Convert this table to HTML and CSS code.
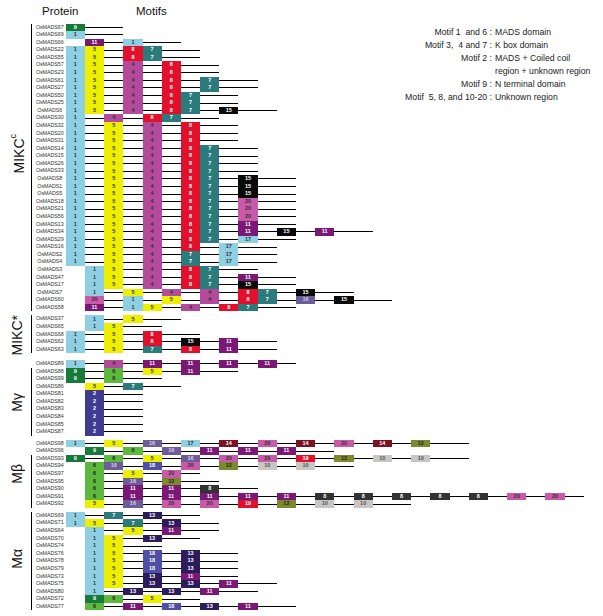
FILE: index.html
```html
<!DOCTYPE html>
<html lang="en">
<head>
<meta charset="utf-8">
<title>MADS-box motifs</title>
<link rel="stylesheet" href="styles.css">
</head>
<body>
<div class="page">
  <header class="head">
    <span class="h-protein">Protein</span>
    <span class="h-motifs">Motifs</span>
  </header>
  <div class="legend">
    <span class="lk">Motif 1  and 6 :</span><span class="lv">MADS domain</span>
    <span class="lk">Motif 3,  4 and 7 :</span><span class="lv">K box domain</span>
    <span class="lk">Motif 2 :</span><span class="lv">MADS + Coiled coil
region + unknown region</span>
    <span class="lk">Motif 9 :</span><span class="lv">N terminal domain</span>
    <span class="lk">Motif  5, 8, and 10-20 :</span><span class="lv">Unknown region</span>
  </div>
  <div id="groups" class="groups"></div>
</div>
<script src="script.js"></script>
</body>
</html>
```
FILE: styles.css
```css
* { box-sizing: border-box; }
html, body { margin: 0; padding: 0; background: #fff; }
body { font-family: "Liberation Sans", Arial, sans-serif; color: #111; }
.page { position: relative; width: 603px; height: 616px; overflow: hidden; }

.head { display: flex; height: 23.5px; padding-left: 42px; }
.head span { font-size: 11.5px; line-height: 11.5px; margin-top: 6px; }
.h-protein { width: 94px; }

.legend {
  position: absolute; left: 381px; top: 25.5px;
  display: grid; grid-template-columns: 111px auto; column-gap: 3px;
  font-size: 8.7px; line-height: 13px; color: #222; white-space: pre;
}
.lk { text-align: right; }

.group { display: flex; }
.group + .group { margin-top: 4px; }
.glabel { width: 41px; display: flex; align-items: center; justify-content: center; padding-left: 3px; }
.glabel span { writing-mode: vertical-rl; transform: rotate(180deg); font-size: 14px; line-height: 1; color: #111; }
.glabel sup { font-size: 9px; }
.g-mc .glabel { padding-bottom: 28px; }
.g-mg .glabel { padding-top: 10px; }
.g-ma .glabel { padding-bottom: 4px; }

.seg { border-left: 1px solid transparent; }
.seg.br { border-left-color: #000; }

.row { display: flex; height: 7.58px; }
.name {
  width: 34px; padding-left: 2px; font-size: 5.4px; line-height: 7.58px;
  text-align: center; color: #333; white-space: nowrap; letter-spacing: -0.1px;
}
.track { display: grid; grid-template-columns: repeat(28, 19.2px); grid-template-rows: 7.58px; }
.track > * { grid-row: 1; }
.ln { align-self: center; height: 1px; background: #000; }
.mb {
  display: flex; align-items: center; justify-content: center;
  font-size: 5.5px; font-weight: bold; font-style: normal; color: #fff; line-height: 1;
}
.m1, .m17 { background: #8ecfe3; color: #333; }
.m2 { background: #3d3c92; }
.m4 { background: #b34a9c; color: #333; }
.m5 { background: #eeee00; color: #333; }
.m6 { background: #5db83e; color: #222; }
.m7 { background: #2b7b7c; }
.m8, .m19 { background: #e3102b; }
.m8d { background: #333; }
.m9 { background: #17793a; }
.m10 { background: #c8c6c4; color: #555; }
.m11 { background: #7b1875; }
.m12 { background: #7b8a2c; color: #222; }
.m13 { background: #2d1c5c; }
.m14 { background: #7c1222; }
.m15 { background: #0a0a0a; }
.m16 { background: #6c5c98; color: #d6d2e6; }
.m18 { background: #4f4fa6; }
.m20 { background: #c95aa9; color: #333; }
```
FILE: script.js
```js
const K = '0:1,2:5,4:4,6:8,7:7';
const data = [
  { label: 'MIKC<sup>c</sup>', cls: 'g-mc', segs: [[true, [
    'OsMADS67|3|0:9', 'OsMADS69|3|0:1', 'OsMADS66|6|1:11,3:1',
    'OsMADS22|7|0:1,1:5,3:8,4:7', 'OsMADS55|7|0:1,1:5,3:8,4:7',
    'OsMADS57|8|0:1,1:5,3:4,5:8', 'OsMADS23|8|0:1,1:5,3:4,5:8',
    'OsMADS61|10|0:1,1:5,3:4,5:8,7:7', 'OsMADS27|10|0:1,1:5,3:4,5:8,7:7',
    'OsMADS50|9|0:1,1:5,3:4,5:8,6:7', 'OsMADS25|9|0:1,1:5,3:4,5:8,6:7',
    'OsMADS6|11|0:1,1:5,3:4,5:8,6:7,8:15',
    'OsMADS30|8|0:1,2:4,4:8,5:7',
    'OsMADS32|9|0:1,2:5,4:4,6:8', 'OsMADS20|9|0:1,2:5,4:4,6:8', 'OsMADS31|9|0:1,2:5,4:4,6:8',
    'OsMADS14|10|' + K, 'OsMADS15|10|' + K, 'OsMADS26|10|' + K, 'OsMADS33|10|' + K,
    'OsMADS8|12|' + K + ',9:15', 'OsMADS1|12|' + K + ',9:15', 'OsMADS5|12|' + K + ',9:15',
    'OsMADS18|12|' + K + ',9:20', 'OsMADS21|12|' + K + ',9:20', 'OsMADS56|12|' + K + ',9:20',
    'OsMADS13|12|' + K + ',9:11', 'OsMADS34|16|' + K + ',9:11,11:15,13:11',
    'OsMADS29|12|' + K + ',9:17',
    'OsMADS16|11|0:1,2:5,4:4,6:8,8:17', 'OsMADS2|11|0:1,2:5,4:4,6:7,8:17', 'OsMADS4|11|0:1,2:5,4:4,6:7,8:17',
    'OsMADS3|10|1:1,2:5,4:4,6:8,7:7', 'OsMADS47|12|1:1,2:5,4:4,6:8,7:7,9:11', 'OsMADS17|12|1:1,2:5,4:4,6:8,7:7,9:15',
    'OsMADS7|15|1:1,3:5,5:4,7:4,9:8,10:7,12:15',
    'OsMADS60|17|1:20,3:1,5:5,7:4,9:8,10:7,12:16,14:15',
    'OsMADS58|12|1:11,3:1,4:5,6:4,8:8,9:7'
  ]]] },
  { label: 'MIKC*', cls: 'g-ms', segs: [[true, [
    'OsMADS37|6|1:1,3:5', 'OsMADS65|5|1:1,2:5', 'OsMADS68|7|0:1,2:5,4:8',
    'OsMADS62|11|0:1,2:5,4:8,6:15,8:11', 'OsMADS63|11|0:1,2:5,4:7,6:8,8:11'
  ]]] },
  { label: 'M\u03b3', cls: 'g-mg', segs: [
    [false, ['OsMADS89|12|0:1,2:4,4:11,6:11,8:11,10:11']],
    [true, [
      'OsMADS88|9|0:9,2:6,4:5,6:11', 'OsMADS99|5|0:9,2:6', 'OsMADS86|6|1:5,3:7',
      'OsMADS81|4|1:2', 'OsMADS82|4|1:2', 'OsMADS83|4|1:2', 'OsMADS84|4|1:2', 'OsMADS85|4|1:2', 'OsMADS87|4|1:2'
    ]]
  ] },
  { label: 'M\u03b2', cls: 'g-mb', segs: [
    [false, [
      'OsMADS98|21|0:1,2:5,4:16,6:17,8:14,10:20,12:14,14:20,16:14,18:12',
      'OsMADS96|14|1:9,3:6,5:16,7:11,9:11,11:11'
    ]],
    [true, [
      'OsMADS93|21|0:9,2:6,4:5,6:16,8:20,10:20,12:19,14:12,16:10,18:10',
      'OsMADS94|15|1:6,2:16,4:18,6:20,8:12,10:10,12:10',
      'OsMADS97|7|1:6,3:5,5:20', 'OsMADS95|8|1:6,3:16,5:12',
      'OsMADS90|10|1:6,3:11,5:11,7:8d',
      'OsMADS91|27|1:6,3:11,5:11,7:11,9:11,11:11,13:8d,15:8d,17:8d,19:8d,21:8d,23:20,25:20',
      'OsMADS92|18|1:5,3:16,5:20,7:20,9:19,11:12,13:10,15:10'
    ]]
  ] },
  { label: 'M\u03b1', cls: 'g-ma', segs: [[true, [
    'OsMADS69|7|0:1,2:7,4:13', 'OsMADS71|8|0:1,1:5,3:7,5:13', 'OsMADS64|8|1:1,3:5,5:11',
    'OsMADS70|7|1:1,2:5,4:13', 'OsMADS74|5|1:1,2:5',
    'OsMADS76|9|1:1,2:5,4:18,6:13', 'OsMADS78|9|1:1,2:5,4:18,6:13', 'OsMADS79|9|1:1,2:5,4:18,6:13',
    'OsMADS73|9|1:1,2:5,4:13,6:11', 'OsMADS75|11|1:1,2:5,4:13,6:13,8:11',
    'OsMADS80|10|1:1,3:13,5:13,7:11', 'OsMADS72|7|1:9,2:6,4:5',
    'OsMADS77|12|1:6,3:11,5:18,7:13,9:11'
  ]]] }
];

const root = document.getElementById('groups');
data.forEach(g => {
  const sec = document.createElement('section');
  sec.className = 'group ' + g.cls;
  const lab = document.createElement('div');
  lab.className = 'glabel';
  lab.innerHTML = '<span>' + g.label + '</span>';
  sec.appendChild(lab);
  const rows = document.createElement('div');
  rows.className = 'rows';
  g.segs.forEach(([br, list]) => {
    const seg = document.createElement('div');
    seg.className = 'seg' + (br ? ' br' : '');
    list.forEach(r => {
      const [name, end, motifs] = r.split('|');
      const ms = motifs.split(',').map(s => s.split(':'));
      const start = Math.min(...ms.map(m => +m[0]));
      let html = '<span class="name">' + name + '</span><div class="track">';
      html += '<i class="ln" style="grid-column:' + (start + 1) + '/' + (+end + 1) + '"></i>';
      ms.forEach(([c, k]) => {
        html += '<b class="mb m' + k + '" style="grid-column:' + (+c + 1) + '">' + k.replace('d', '') + '</b>';
      });
      html += '</div>';
      const row = document.createElement('div');
      row.className = 'row';
      row.innerHTML = html;
      seg.appendChild(row);
    });
    rows.appendChild(seg);
  });
  sec.appendChild(rows);
  root.appendChild(sec);
});
```
